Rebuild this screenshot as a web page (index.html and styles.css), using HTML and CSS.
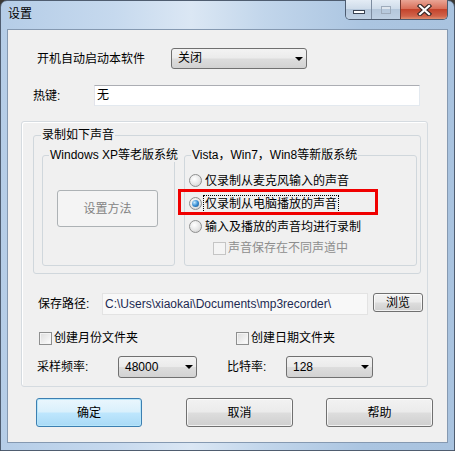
FILE: index.html
```html
<!DOCTYPE html>
<html lang="zh-CN">
<head>
  <meta charset="UTF-8">
  <title>设置</title>
  <link rel="stylesheet" href="styles.css">
</head>
<body>

<div class="window">
  <!-- Title bar with caption buttons -->
  <div class="titlebar">
    <span class="title">设置</span>
    <div class="caption-buttons">
      <div class="cap-btn cap-min"><span class="min-glyph"></span></div>
      <div class="cap-btn cap-max"><span class="max-glyph"></span></div>
      <div class="cap-btn cap-close">
        <svg width="15" height="12" viewBox="0 0 15 12">
          <path d="M3 2 L12 10 M12 2 L3 10" stroke="#3a2a28" stroke-width="4.4" stroke-linecap="square"/>
          <path d="M3 2 L12 10 M12 2 L3 10" stroke="#fff" stroke-width="2.2" stroke-linecap="square"/>
        </svg>
      </div>
    </div>
  </div>

  <div class="client">
    <div class="row row-autostart">
      <span class="label label-autostart">开机自动启动本软件</span>
      <div class="combo combo-autostart">关闭</div>
    </div>

    <div class="row row-hotkey">
      <span class="label label-hotkey">热键:</span>
      <div class="edit edit-hotkey">无</div>
    </div>

    <div class="panel">
      <fieldset class="group-record">
        <legend>录制如下声音</legend>
        <div class="group-cols">
          <fieldset class="group group-old">
            <legend>Windows XP等老版系统</legend>
            <div class="btn btn-disabled btn-method">设置方法</div>
          </fieldset>

          <fieldset class="group group-new">
            <legend>Vista，Win7，Win8等新版系统</legend>
            <div class="option-list">
              <div class="option"><span class="radio"></span><span>仅录制从麦克风输入的声音</span></div>
              <div class="option">
                <span class="radio checked"></span><span class="focus-text">仅录制从电脑播放的声音</span>
                <span class="highlight"></span>
              </div>
              <div class="option"><span class="radio"></span><span>输入及播放的声音均进行录制</span></div>
              <div class="option option-sub disabled"><span class="check"></span><span>声音保存在不同声道中</span></div>
            </div>
          </fieldset>
        </div>
      </fieldset>

      <div class="row row-path">
        <span class="label label-path">保存路径:</span>
        <div class="edit edit-path">C:\Users\xiaokai\Documents\mp3recorder\</div>
        <div class="btn btn-browse">浏览</div>
      </div>

      <div class="row row-checks">
        <div class="check-item check-month"><span class="check"></span><span>创建月份文件夹</span></div>
        <div class="check-item"><span class="check"></span><span>创建日期文件夹</span></div>
      </div>

      <div class="row row-rates">
        <span class="label label-rate">采样频率:</span>
        <div class="combo combo-rate">48000</div>
        <span class="label label-bitrate">比特率:</span>
        <div class="combo combo-bitrate">128</div>
      </div>
    </div>

    <div class="row row-buttons">
      <div class="btn btn-default btn-ok">确定</div>
      <div class="btn btn-cancel">取消</div>
      <div class="btn btn-help">帮助</div>
    </div>
  </div>
</div>

</body>
</html>
```

FILE: styles.css
```css
/* General reset */
* {
  box-sizing: border-box;
}

body {
  margin: 0;
  background-color: #3b3935;
  font-family: "Liberation Sans", "Noto Sans CJK SC", sans-serif;
  font-size: 12px;
  color: #000;
}

/* Window frame */
.window {
  width: 455px;
  height: 451px;
  border: 1px solid #4f5d70;
  border-radius: 7px 7px 0 0;
  padding: 0 6px 7px 6px;
  background: linear-gradient(90deg, #b5cde7 0%, #c6d9ee 25%, #dbe7f4 42%, #c2d6eb 58%, #abc5e1 80%, #a9c3df 100%);
}

.titlebar {
  height: 28px;
  display: flex;
  align-items: flex-start;
}

.title {
  margin-left: 1px;
  line-height: 26px;
}

/* Caption buttons */
.caption-buttons {
  margin-left: auto;
  margin-top: -1px;
  display: flex;
  height: 20px;
  border: 1px solid #4d5c70;
  border-top: none;
  border-radius: 0 0 5px 5px;
  overflow: hidden;
}

.cap-btn {
  height: 19px;
  display: flex;
  align-items: center;
  justify-content: center;
  background: linear-gradient(#e4ecf5 0%, #cfdcea 45%, #b5c7db 50%, #bfd0e3 100%);
}

.cap-min {
  width: 25px;
}

.cap-max {
  width: 29px;
  border-left: 1px solid #7d8ca0;
}

.cap-close {
  width: 47px;
  border-left: 1px solid #7a3a30;
  background: linear-gradient(#e9a595 0%, #d9705a 45%, #c4442c 50%, #d0634a 85%, #e08f70 100%);
}

.min-glyph {
  width: 12px;
  height: 4px;
  margin-top: 5px;
  background: #fff;
  border: 1px solid #3a4352;
}

.max-glyph {
  width: 10px;
  height: 8px;
  border: 1px solid #9eabbb;
  box-shadow: inset 0 2px #dfe6ee;
}

/* Client area */
.client {
  height: 414px;
  border: 1px solid #8599b1;
  background-color: #f0f0f0;
}

.row {
  display: flex;
  align-items: center;
}

.label {
  line-height: 16px;
  white-space: nowrap;
}

.row-autostart {
  margin-top: 18px;
  padding-left: 29px;
}

.label-autostart {
  width: 134px;
}

.row-hotkey {
  margin-top: 16px;
  padding-left: 25px;
}

.label-hotkey {
  width: 61px;
}

/* Combo boxes */
.combo {
  position: relative;
  height: 21px;
  border: 1px solid #707070;
  border-radius: 3px;
  padding-left: 6px;
  line-height: 19px;
  background: linear-gradient(#f3f3f3 0%, #ebebeb 48%, #dddddd 52%, #d2d2d2 100%);
}

.combo::after {
  content: "";
  position: absolute;
  right: 3px;
  top: 8px;
  border-left: 4px solid transparent;
  border-right: 4px solid transparent;
  border-top: 4px solid #000;
}

.combo-autostart {
  width: 136px;
}

/* Edit fields */
.edit {
  height: 21px;
  border: 1px solid;
  border-color: #abadb3 #e3e9ef #e3e9ef #e2e3ea;
  background-color: #fff;
  padding-left: 2px;
  line-height: 19px;
  white-space: nowrap;
}

.edit-hotkey {
  width: 326px;
}

/* Outer panel */
.panel {
  margin: 15px 0 0 13px;
  width: 407px;
  height: 266px;
  border: 1px solid #d5dbe0;
  border-radius: 3px;
  box-shadow: inset 1px 1px #fff;
}

fieldset {
  margin: 0;
  min-width: 0;
  border: 1px solid #d0d7dc;
  border-radius: 3px;
}

legend {
  padding: 0 1px;
  line-height: 14px;
  white-space: nowrap;
}

.group-record {
  margin: 6px 0 0 11px;
  width: 388px;
  padding: 6px 3px 7px 8px;
}

.group-record > legend {
  margin-left: -1px;
}

.group-cols {
  display: flex;
  gap: 9px;
}

.group {
  height: 118px;
  padding: 0;
}

.group > legend {
  margin-left: 6px;
}

.group-old {
  width: 133px;
}

.group-new {
  width: 233px;
}

/* Buttons */
.btn {
  display: flex;
  align-items: center;
  justify-content: center;
  border: 1px solid #707070;
  border-radius: 3px;
  background: linear-gradient(#f2f2f2 0%, #ebebeb 48%, #dddddd 52%, #cfcfcf 100%);
  box-shadow: inset 0 0 0 1px rgba(255, 255, 255, 0.7);
  line-height: 16px;
}

.btn-disabled {
  border-color: #adb2b5;
  background: #f4f4f4;
  box-shadow: none;
  color: #838383;
}

.btn-method {
  margin: 28px 0 0 14px;
  width: 101px;
  height: 37px;
}

.btn-default {
  border-color: #3c7fb1;
  background: linear-gradient(#eaf6fd 0%, #d9f0fc 48%, #bee6fd 52%, #a9daf6 100%);
  box-shadow: inset 0 0 0 1px #b6e6fb;
}

/* Radio options */
.option-list {
  margin-top: 7px;
}

.option {
  position: relative;
  height: 23px;
  display: flex;
  align-items: center;
  gap: 3px;
  padding-left: 4px;
  line-height: 16px;
  white-space: nowrap;
}

.radio {
  width: 13px;
  height: 13px;
  flex-shrink: 0;
  border-radius: 50%;
  border: 1px solid #8e8f8f;
  background: radial-gradient(circle at 40% 35%, #ffffff 0%, #e6e6e6 55%, #c6c6c6 100%);
  display: flex;
  align-items: center;
  justify-content: center;
}

.radio.checked::after {
  content: "";
  width: 7px;
  height: 7px;
  border-radius: 50%;
  background: radial-gradient(circle at 35% 35%, #c9ecff 0%, #3a8fd4 50%, #134a80 100%);
}

.focus-text {
  outline: 1px dotted #000;
  padding: 0 1px;
  margin-left: -1px;
}

/* Red annotation box over the selected option */
.highlight {
  position: absolute;
  left: -7px;
  top: -3px;
  width: 200px;
  height: 26px;
  border: 3px solid #f00000;
}

.option-sub {
  height: 20px;
  padding-left: 28px;
  gap: 2px;
}

.check {
  width: 13px;
  height: 13px;
  flex-shrink: 0;
  border: 1px solid #8e8f8f;
  background: linear-gradient(135deg, #dcdcdc 0%, #f0f0f0 60%, #ffffff 100%);
  box-shadow: inset 0 0 0 1px #f4f4f4;
}

.disabled {
  color: #8d8d8d;
}

.disabled .check {
  border-color: #c5c5c5;
  background: #f4f4f4;
  box-shadow: none;
}

/* Save path row */
.row-path {
  margin-top: 19px;
  padding-left: 16px;
  align-items: flex-start;
}

.label-path {
  width: 64px;
  line-height: 22px;
}

.edit-path {
  width: 266px;
  height: 22px;
  line-height: 20px;
  border-color: #e3e3e3;
  background-color: #f8f8f8;
  color: #1c2a52;
}

.btn-browse {
  margin-left: 5px;
  width: 50px;
  height: 19px;
}

/* Checkbox row */
.row-checks {
  margin-top: 16px;
  padding-left: 17px;
  height: 14px;
}

.check-item {
  display: flex;
  align-items: center;
  gap: 2px;
  line-height: 16px;
}

.check-month {
  width: 197px;
}

/* Sample rate row */
.row-rates {
  margin-top: 11px;
  padding-left: 15px;
}

.label-rate {
  width: 81px;
}

.combo-rate {
  width: 79px;
  height: 22px;
  line-height: 20px;
}

.label-bitrate {
  margin-left: 30px;
  width: 59px;
}

.combo-bitrate {
  width: 87px;
  height: 22px;
  line-height: 20px;
}

/* Dialog buttons */
.row-buttons {
  margin-top: 11px;
  padding-left: 28px;
}

.row-buttons .btn {
  height: 29px;
}

.btn-ok {
  width: 106px;
}

.btn-cancel {
  margin-left: 44px;
  width: 107px;
}

.btn-help {
  margin-left: 33px;
  width: 107px;
}
```
